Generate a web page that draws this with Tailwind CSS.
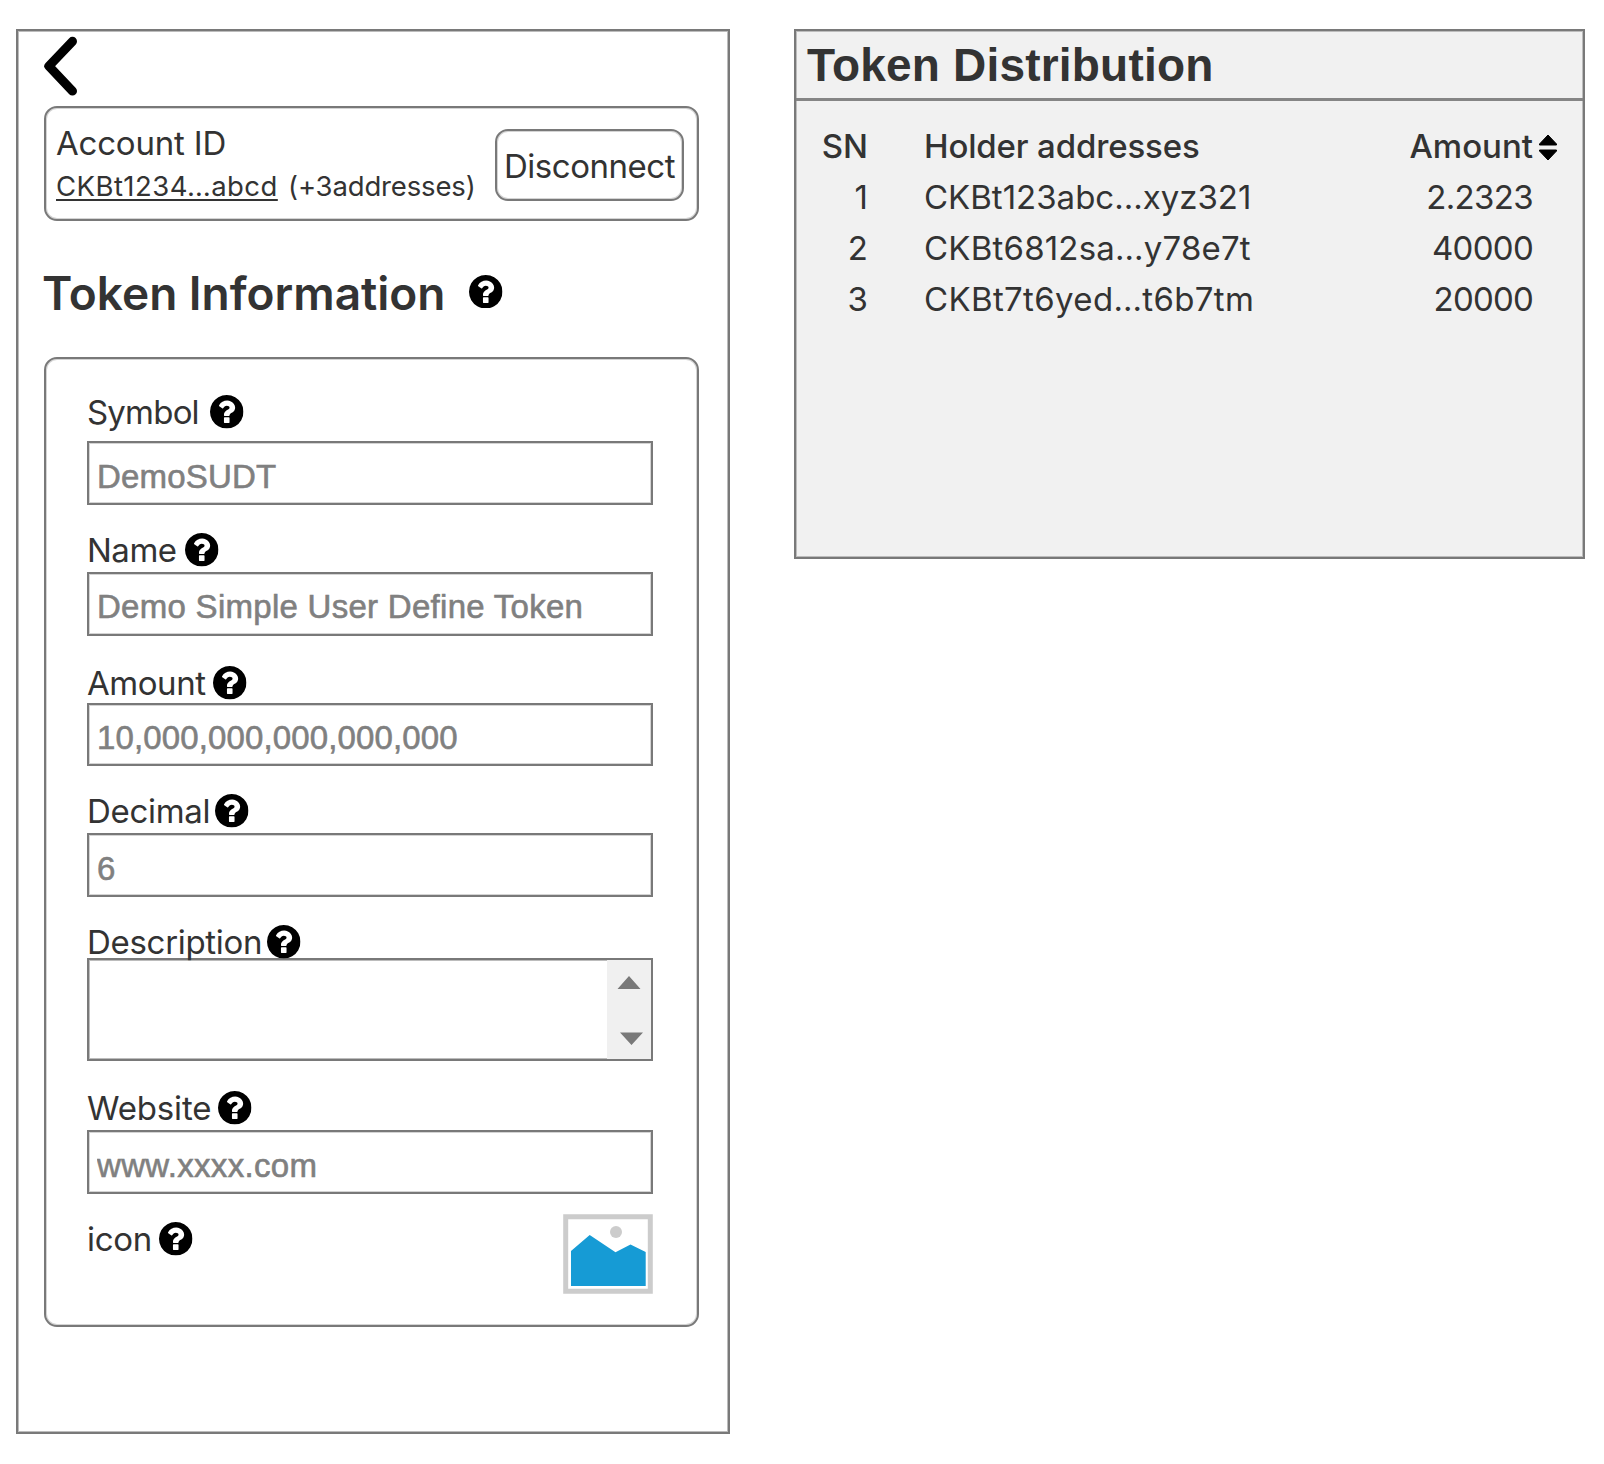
<!DOCTYPE html>
<html lang="en">
<head>
<meta charset="utf-8">
<title>Token Information</title>
<script src="https://cdn.jsdelivr.net/npm/@tailwindcss/browser@4"></script>
</head>
<body class="bg-white font-['Inter',sans-serif] text-[33px] text-[#333333]">
<svg class="hidden">
  <symbol id="help" viewBox="128 128 1536 1536"><path d="M1024 1376v-192q0-14-9-23t-23-9h-192q-14 0-23 9t-9 23v192q0 14 9 23t23 9h192q14 0 23-9t9-23zm256-672q0-88-55.5-163t-138.5-116-170-41q-243 0-371 213-15 24 8 42l132 100q7 6 19 6 16 0 25-12 53-68 86-92 34-24 86-24 48 0 85.5 26t37.5 59q0 38-20 61t-68 45q-63 28-115.5 86.5t-52.5 125.5v36q0 14 9 23t23 9h192q14 0 23-9t9-23q0-19 21.5-49.5t54.5-49.5q32-18 49-28.5t46-35 44.5-48 28-60.5 12.5-81zm384 192q0 209-103 385.5t-279.5 279.5-385.5 103-385.5-103-279.5-279.5-103-385.5 103-385.5 279.5-279.5 385.5-103 385.5 103 279.5 279.5 103 385.5z"/></symbol>
</svg>
<main class="flex items-start gap-16 pl-4 pt-[29px] whitespace-nowrap">
  <section class="h-[1405px] w-[714px] shrink-0 border-2 border-[#797979] pl-[26px] pr-[29px] pt-[5px] shadow-[inset_0_0_0_1px_#bcbcbc]">
    <svg class="block h-[60px] w-[34px]" viewBox="0 0 34 60" fill="none" stroke="#000"><path d="M28.500 5.300 4.900 30.200l23.600 24.900" stroke-width="7"/><path d="M28.500 5.300 4.900 30.200l23.600 24.900" stroke-width="9" stroke-linecap="round" stroke-linejoin="round"/></svg>
    <div class="mt-[10px] flex h-[115px] items-start justify-between rounded-[13px] border-2 border-[#797979] pl-[10px] pr-[13px] shadow-[inset_0_0_0_1px_#d4d4d4]">
      <div class="pt-[15px]">
        <div class="leading-[40px] tracking-[-0.2px]">Account ID</div>
        <div class="mt-[3px] flex text-[27.5px] leading-[40px]"><div class="w-[232px]"><a class="underline decoration-2 underline-offset-[3px] tracking-[0.45px]">CKBt1234…abcd</a></div><span class="tracking-[-0.15px]">(+3addresses)</span></div>
      </div>
      <button class="mt-[21px] flex h-[72px] w-[189px] items-center justify-center rounded-[13px] border-2 border-[#797979] pt-[3px] tracking-[-0.45px] shadow-[inset_0_0_0_1px_#d4d4d4]">Disconnect</button>
    </div>
    <div class="mt-[44px] flex h-[56px] items-center">
      <h1 class="-ml-[2px] w-[427px] text-[46px] leading-[56px] font-semibold">Token Information</h1>
      <svg class="mb-[3px] size-[33.5px]"><use href="#help"/></svg>
    </div>
    <div class="mt-[36px] h-[970px] rounded-[13px] border-2 border-[#797979] pl-[41px] pt-[33px] shadow-[inset_0_0_0_1px_#d4d4d4]">
      <div class="flex h-[49px] items-start leading-[40px]"><label class="w-[123px] tracking-[-0.8px]">Symbol</label><svg class="mt-[3px] size-[33.5px]"><use href="#help"/></svg></div>
      <input class="block h-[64px] w-[566px] border-2 border-[#797979] pl-[8px] pt-[7px] font-['Liberation_Sans',sans-serif] tracking-[0.2px] shadow-[inset_0_0_0_1px_#d4d4d4] placeholder:text-[#808080] placeholder:[-webkit-text-stroke:0.6px_#808080]" placeholder="DemoSUDT">
      <div class="mt-[25px] flex h-[42px] items-start leading-[40px]"><label class="w-[98px] tracking-[-0.5px]">Name</label><svg class="mt-[3px] size-[33.5px]"><use href="#help"/></svg></div>
      <input class="block h-[64px] w-[566px] border-2 border-[#797979] pl-[8px] pt-[6px] font-['Liberation_Sans',sans-serif] tracking-[0.28px] shadow-[inset_0_0_0_1px_#d4d4d4] placeholder:text-[#808080] placeholder:[-webkit-text-stroke:0.6px_#808080]" placeholder="Demo Simple User Define Token">
      <div class="mt-[27px] flex h-[40px] items-start leading-[40px]"><label class="w-[126px] tracking-[-0.45px]">Amount</label><svg class="mt-[3px] size-[33.5px]"><use href="#help"/></svg></div>
      <input class="block h-[63px] w-[566px] border-2 border-[#797979] pl-[8px] pt-[6px] font-['Liberation_Sans',sans-serif] tracking-[0.13px] shadow-[inset_0_0_0_1px_#d4d4d4] placeholder:text-[#808080] placeholder:[-webkit-text-stroke:0.6px_#808080]" placeholder="10,000,000,000,000,000">
      <div class="mt-[25px] flex h-[42px] items-start leading-[40px]"><label class="w-[128px] tracking-[-0.3px]">Decimal</label><svg class="mt-[3px] size-[33.5px]"><use href="#help"/></svg></div>
      <input class="block h-[64px] w-[566px] border-2 border-[#797979] pl-[8px] pt-[8px] font-['Liberation_Sans',sans-serif] shadow-[inset_0_0_0_1px_#d4d4d4] placeholder:text-[#808080] placeholder:[-webkit-text-stroke:0.6px_#808080]" placeholder="6">
      <div class="mt-[25px] flex h-[36px] items-start leading-[40px]"><label class="w-[180px] tracking-[-0.3px]">Description</label><svg class="mt-[3px] size-[33.5px]"><use href="#help"/></svg></div>
      <div class="flex h-[103px] w-[566px] justify-end border-2 border-[#797979] bg-white shadow-[inset_0_0_0_1px_#bcbcbc]">
        <svg class="h-[99px] w-[44px] bg-[#f0f0f0]" viewBox="0 0 44 99" fill="#797979"><path d="M22 16 33.500 29h-23zM24.500 85 13 72.500h23z"/></svg>
      </div>
      <div class="mt-[27px] flex h-[42px] items-start leading-[40px]"><label class="w-[131px] tracking-[-0.15px]">Website</label><svg class="mt-[3px] size-[33.5px]"><use href="#help"/></svg></div>
      <input class="block h-[64px] w-[566px] border-2 border-[#797979] pl-[8px] pt-[8px] font-['Liberation_Sans',sans-serif] tracking-[0.33px] shadow-[inset_0_0_0_1px_#d4d4d4] placeholder:text-[#808080] placeholder:[-webkit-text-stroke:0.6px_#808080]" placeholder="www.xxxx.com">
      <div class="mt-[20px] flex w-[566px] items-start leading-[40px]"><label class="mt-[5px] w-[72px] tracking-[-0.3px]">icon</label><svg class="mt-[8px] size-[33.5px]"><use href="#help"/></svg>
        <svg class="ml-auto h-[80px] w-[90px]" viewBox="0 0 90 80"><path d="M2.700 2.700h84.600v74.600H2.700z" fill="#fff" stroke="#cccccc" stroke-width="5"/><circle cx="53" cy="18" r="6" fill="#cccccc"/><path d="M8 37 26.700 21 52.500 38.200 67.500 30.500 82.700 38v34H8z" fill="#169bd5"/></svg>
      </div>
    </div>
  </section>
  <section class="h-[530px] w-[791px] shrink-0 border-2 border-[#797979] bg-[#f1f1f1] shadow-[inset_0_0_0_1px_#bcbcbc]">
    <h2 class="h-[70px] border-b-3 border-[#858585] pl-[11px] pt-[6px] font-['Liberation_Sans',sans-serif] text-[46px] leading-[56px] font-bold tracking-[0.2px]">Token Distribution</h2>
    <div class="grid grid-cols-[72px_56px_360px_1fr] pt-[20px] pr-[50px] leading-[51px]">
      <div class="text-right font-medium">SN</div><div></div><div class="font-medium tracking-[-0.15px]">Holder addresses</div>
      <div class="relative text-right font-medium">Amount<svg class="absolute top-[13px] -right-[25px] h-[27px] w-[20px]" viewBox="0 0 20 27"><path d="M10 1 18.500 10v1h-17v-1zM1.500 16h17v1L10 26 1.500 17z" stroke="#000" stroke-linejoin="round"/></svg></div>
      <div class="text-right">1</div><div></div><div>CKBt123abc…xyz321</div><div class="text-right tracking-[-0.65px]">2.2323</div>
      <div class="text-right">2</div><div></div><div class="tracking-[0.2px]">CKBt6812sa…y78e7t</div><div class="text-right tracking-[-0.7px]">40000</div>
      <div class="text-right">3</div><div></div><div class="tracking-[0.35px]">CKBt7t6yed…t6b7tm</div><div class="text-right tracking-[-0.8px]">20000</div>
    </div>
  </section>
</main>
</body>
</html>
